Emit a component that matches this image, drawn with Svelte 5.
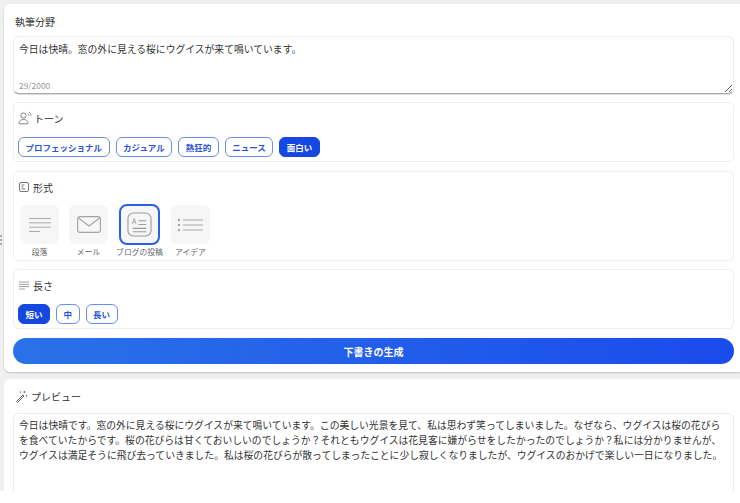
<script>
  const tones = ['プロフェッショナル', 'カジュアル', '熱狂的', 'ニュース', '面白い'];
  const lengths = ['短い', '中', '長い'];
  let tone = $state('面白い');
  let length = $state('短い');
  let format = $state('blog');
  let draft = $state('今日は快晴。窓の外に見える桜にウグイスが来て鳴いています。');
  const preview = '今日は快晴です。窓の外に見える桜にウグイスが来て鳴いています。この美しい光景を見て、私は思わず笑ってしまいました。なぜなら、ウグイスは桜の花びらを食べていたからです。桜の花びらは甘くておいしいのでしょうか\uFF1Fそれともウグイスは花見客に嫌がらせをしたかったのでしょうか\uFF1F私には分かりませんが、ウグイスは満足そうに飛び去っていきました。私は桜の花びらが散ってしまったことに少し寂しくなりましたが、ウグイスのおかげで楽しい一日になりました。';
</script>

<div class="page">
  <div class="handle"><i></i><i></i><i></i></div>
  <section class="card top">
    <h2 class="title">執筆分野</h2>
    <div class="input">
      <textarea bind:value={draft}></textarea>
      <span class="count">{draft.length}/2000</span>
    </div>

    <div class="box tone">
      <div class="head">
        <svg width="14" height="14" viewBox="0 0 14 14" fill="none" stroke="#777" stroke-width="0.9">
          <circle cx="5.5" cy="4.5" r="2.6" />
          <path d="M1 12.2c0-2.5 2-3.7 4.5-3.7S10 9.700 10 12.200c0 .4-.3.6-.6.6H1.600c-.3 0-.6-.2-.6-.6z" />
          <path d="M9.500 2.500c1 .5 1.500 1.300 1.500 2.300M11 1c1.400.8 2 2 2 3.500" />
        </svg>
        <span>トーン</span>
      </div>
      <div class="chips">
        {#each tones as t}
          <button class="chip" class:on={tone === t} onclick={() => (tone = t)}>{t}</button>
        {/each}
      </div>
    </div>

    <div class="box format">
      <div class="head">
        <svg width="12" height="12" viewBox="0 0 12 12" fill="none" stroke="#666" stroke-width="0.9">
          <rect x="1.500" y="1.500" width="9" height="9" rx="1.500" />
          <path d="M3.500 4h3M3.500 6h2M3.500 8h4" />
        </svg>
        <span>形式</span>
      </div>
      <div class="formats">
        <button class="fmt" onclick={() => (format = 'para')}>
          <span class="tile" class:sel={format === 'para'}>
            <svg width="22" height="14" viewBox="0 0 22 14" fill="none" stroke="#aaa" stroke-width="1">
              <path d="M0 .5h22M0 4.800h22M0 9.200h22M0 13.500h11" />
            </svg>
          </span>
          <span class="cap">段落</span>
        </button>
        <button class="fmt" onclick={() => (format = 'mail')}>
          <span class="tile" class:sel={format === 'mail'}>
            <svg width="24" height="17" viewBox="0 0 24 17" fill="none" stroke="#a4a4a4" stroke-width="1.100">
              <rect x=".6" y=".6" width="22.800" height="15.800" rx="2.500" />
              <path d="M1.500 2l10.500 8 10.500-8" />
            </svg>
          </span>
          <span class="cap">メール</span>
        </button>
        <button class="fmt" onclick={() => (format = 'blog')}>
          <span class="tile" class:sel={format === 'blog'}>
            <svg width="25" height="25" viewBox="0 0 26 26" fill="none" stroke="#999" stroke-width="1.100">
              <rect x="1" y="1" width="24" height="24" rx="5.500" />
              <path d="M12 9h8M12 13h8M6 17h14M6 20.500h14" />
              <path d="M5.500 12.500L7.500 6.500 9.500 12.500M6.200 10.500h2.600" stroke-width="0.800" />
            </svg>
          </span>
          <span class="cap">ブログの投稿</span>
        </button>
        <button class="fmt" onclick={() => (format = 'idea')}>
          <span class="tile" class:sel={format === 'idea'}>
            <svg width="25" height="12" viewBox="0 0 25 12" fill="none" stroke="#aaa" stroke-width="1">
              <path d="M5 1h20M5 6h20M5 11h20" />
              <path d="M0 1h2M0 6h2M0 11h2" stroke="#888" stroke-width="1.400" />
            </svg>
          </span>
          <span class="cap">アイデア</span>
        </button>
      </div>
    </div>

    <div class="box len">
      <div class="head">
        <svg width="12" height="9" viewBox="0 0 12 9" fill="none" stroke="#888" stroke-width="0.800">
          <path d="M1 1h10M1 3.300h10M1 5.600h10M1 8h6" />
        </svg>
        <span>長さ</span>
      </div>
      <div class="chips">
        {#each lengths as l}
          <button class="chip" class:on={length === l} onclick={() => (length = l)}>{l}</button>
        {/each}
      </div>
    </div>

    <button class="generate">下書きの生成</button>
  </section>

  <section class="card bottom">
    <div class="head preview-head">
      <svg width="13" height="13" viewBox="0 0 13 13" fill="none" stroke="#666" stroke-width="1">
        <path d="M1.500 11.500L8 5l1 1-6.500 6.500z" />
        <path d="M9.500 1v2M8.500 2h2M11.500 5v1.500M10.800 5.700h1.500M5.500 1.500v1.200M4.900 2.100h1.200" stroke-width="0.800" />
      </svg>
      <span>プレビュー</span>
    </div>
    <div class="output">{preview}</div>
  </section>
</div>

<style>
  :global(body) {
    background: #fff;
    font-family: "Noto Sans CJK JP", "Noto Sans", sans-serif;
  }

  .page {
    position: relative;
    height: 491px;
    overflow: hidden;
    background: #f0f0f0;
    padding: 4px 0 0 4px;
    box-sizing: border-box;
    display: flex;
    flex-direction: column;
    gap: 7px;
  }

  .handle {
    position: absolute;
    left: 0;
    top: 235px;
    display: flex;
    flex-direction: column;
    gap: 2px;
  }

  .handle i {
    width: 2px;
    height: 2px;
    background: #aaa;
  }

  .card {
    background: #fff;
    border-radius: 6px 0 0 6px;
    box-sizing: border-box;
    padding: 0 6px 0 9px;
    flex: none;
  }

  .top {
    height: 368px;
    box-shadow: 0 1px 2px rgba(0, 0, 0, 0.2);
    display: flex;
    flex-direction: column;
  }

  .bottom {
    flex: 1;
    border-radius: 6px 0 0 0;
  }

  .title {
    margin: 0;
    padding: 11px 0 0 2px;
    height: 21px;
    font-size: 10px;
    line-height: 14px;
    font-weight: 400;
    color: #333;
  }

  .input {
    position: relative;
    height: 58px;
    margin-bottom: 8px;
  }

  textarea {
    display: block;
    width: 100%;
    height: 100%;
    box-sizing: border-box;
    padding: 5px 5px 4px;
    border: 1px solid #ececec;
    border-bottom: 1px solid #aaa;
    border-radius: 6px;
    box-shadow: 0 1px 0 #ddd;
    font: inherit;
    font-size: 9.800px;
    line-height: 15px;
    color: #333;
    background: #fff;
    outline: none;
    resize: vertical;
  }

  .count {
    position: absolute;
    left: 6px;
    bottom: 3px;
    font-size: 8.400px;
    line-height: 12px;
    color: #999;
  }

  .box {
    border: 1px solid #f0f0f0;
    border-radius: 5px;
    box-sizing: border-box;
    padding: 0 4px;
  }

  .tone {
    height: 60px;
    margin-bottom: 9px;
  }

  .format {
    height: 90px;
    margin-bottom: 8px;
  }

  .len {
    height: 60px;
    margin-bottom: 9px;
  }

  .head {
    display: flex;
    align-items: center;
    gap: 3px;
    height: 30px;
    font-size: 10px;
    color: #333;
  }

  .tone .head {
    gap: 2px;
  }

  .chips {
    display: flex;
    gap: 6px;
    margin-top: 4px;
  }

  .chip {
    height: 20px;
    padding: 0 6.500px;
    border: 1px solid #6a8ff0;
    border-radius: 6px;
    background: #fff;
    color: #2a55d8;
    font: inherit;
    font-size: 8.500px;
    font-weight: 700;
    line-height: 18px;
    cursor: pointer;
  }

  .chip.on {
    background: #1448e0;
    border-color: #1448e0;
    color: #fff;
  }

  .formats {
    display: flex;
    gap: 10px;
    margin-top: 3px;
    padding-left: 2px;
  }

  .fmt {
    width: 39px;
    padding: 0;
    border: none;
    background: none;
    font: inherit;
    display: flex;
    flex-direction: column;
    align-items: center;
    gap: 2px;
    cursor: pointer;
  }

  .fmt:nth-child(3) {
    margin: 0 2px;
  }

  .tile {
    width: 39px;
    height: 39px;
    box-sizing: border-box;
    border-radius: 6px;
    background: #f6f6f6;
    display: flex;
    align-items: center;
    justify-content: center;
    flex: none;
  }

  .tile.sel {
    width: 41px;
    height: 41px;
    margin: -1px 0;
    border: 2px solid #2c5fe6;
    border-radius: 8px;
    background: #f6f6f6;
  }

  .cap {
    font-size: 7.800px;
    line-height: 12px;
    color: #666;
    white-space: nowrap;
  }

  .generate {
    height: 26px;
    border: none;
    border-radius: 13px;
    background: linear-gradient(90deg, #2a72e8, #1a4bec);
    color: #fff;
    font: inherit;
    font-size: 10px;
    font-weight: 700;
    cursor: pointer;
  }

  .preview-head {
    height: 34px;
    padding-left: 2px;
  }

  .output {
    height: 100px;
    box-sizing: border-box;
    padding: 4px 6px 3px 5px;
    border: 1px solid #ececec;
    border-radius: 6px;
    font-size: 9.800px;
    line-height: 15px;
    color: #333;
  }
</style>
